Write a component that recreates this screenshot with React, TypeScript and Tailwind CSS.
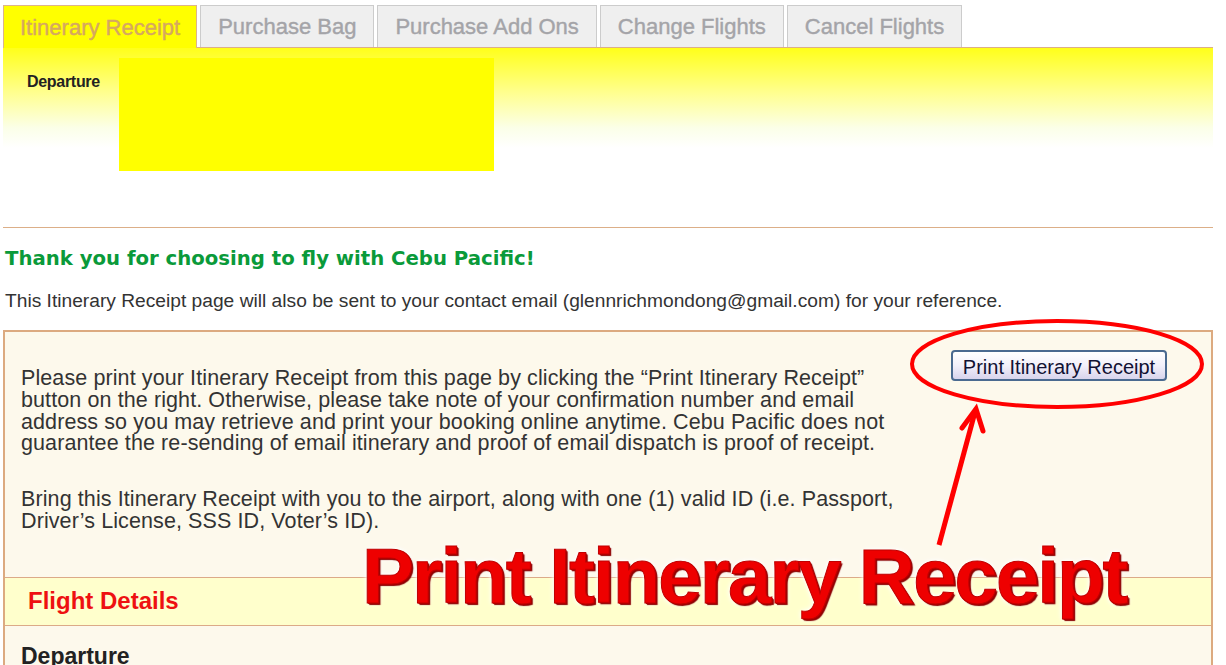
import React from "react";

const tabs = ["Itinerary Receipt", "Purchase Bag", "Purchase Add Ons", "Change Flights", "Cancel Flights"];

function Tabs() {
  return (
    <div className="flex items-end gap-[3px] pt-[5px] h-[47px]">
      {tabs.map((t, i) =>
        i === 0 ? (
          <div
            key={t}
            className="relative z-10 -mb-px flex h-[43px] items-center border border-b-0 border-[#dcb48c] bg-[#ffff00] px-[16px] text-[22px] text-[#d6a860] [-webkit-text-stroke:0.4px_#d6a860]"
          >
            {t}
          </div>
        ) : (
          <div
            key={t}
            className="flex h-[42px] items-center border border-[#cccccc] border-b-0 bg-[#efefef] px-[17px] text-[22px] text-[#a4a4a8] [-webkit-text-stroke:0.4px_#a4a4a8]"
          >
            {t}
          </div>
        )
      )}
    </div>
  );
}

function Overlay() {
  return (
    <>
      <svg className="pointer-events-none absolute left-0 top-0" width="1226" height="665">
        <ellipse cx="1057" cy="364" rx="145" ry="43" fill="none" stroke="#ff0000" strokeWidth="4" />
        <line x1="939" y1="545" x2="975" y2="412" stroke="#ff0000" strokeWidth="5" />
        <polyline points="962,428 976,409 983,431" fill="none" stroke="#ff0000" strokeWidth="5" strokeLinecap="round" />
      </svg>
      <div className="pointer-events-none absolute left-[362px] top-[537px] whitespace-nowrap font-['Liberation_Sans',Arial,sans-serif] text-[78px] font-bold leading-[78px] tracking-[-2px] text-[#ee0000] [text-shadow:1px_1px_0_#a00000,2px_2px_1px_#8a0000,0_0_4px_#ffffff,0_0_6px_#ffffff] [-webkit-text-stroke:1px_#c00000]">
        Print Itinerary Receipt
      </div>
    </>
  );
}

export default function App() {
  return (
    <div className="relative h-[665px] w-[1226px] overflow-hidden bg-white font-['Liberation_Sans',Arial,sans-serif] text-[#333333]">
      <div className="pl-[3px] pr-[13px]">
        <Tabs />

        <div className="flex h-[181px] items-start gap-[19px] border-y border-[#dcaf88] bg-[linear-gradient(to_bottom,#ffff1a_0px,#ffff90_45px,#fbffe8_80px,#ffffff_100px)] pl-[24px] pt-[10px]">
          <div className="mt-[12px] text-[16px] font-bold tracking-[-0.3px] text-[#222222]">Departure</div>
          <div className="h-[113px] w-[375px] bg-[#ffff00]" />
        </div>

        <h2 className="mt-[16px] pl-[2px] font-['DejaVu_Sans',Verdana,sans-serif] text-[19.7px] font-bold text-[#0a9a3a]">
          Thank you for choosing to fly with Cebu Pacific!
        </h2>
        <p className="mt-[13px] pl-[2px] text-[19.2px]">
          This Itinerary Receipt page will also be sent to your contact email (glennrichmondong@gmail.com) for your
          reference.
        </p>

        <div className="mt-[15px] border-2 border-b-0 border-[#dcaa80] bg-[#fdf9ec]">
          <div className="flex items-start justify-between pl-[16px] pr-[44px] pt-[18px]">
            <div className="mt-[18px] w-[900px] whitespace-nowrap text-[21.5px] leading-[21.7px] tracking-[0.1px]">
              <p>
                Please print your Itinerary Receipt from this page by clicking the “Print Itinerary Receipt”
                <br />
                button on the right. Otherwise, please take note of your confirmation number and email
                <br />
                address so you may retrieve and print your booking online anytime. Cebu Pacific does not
                <br />
                guarantee the re-sending of email itinerary and proof of email dispatch is proof of receipt.
              </p>
              <p className="mt-[34px]">
                Bring this Itinerary Receipt with you to the airport, along with one (1) valid ID (i.e. Passport,
                <br />
                Driver’s License, SSS ID, Voter’s ID).
              </p>
            </div>
            <button className="h-[31px] w-[216px] rounded-[4px] border-2 border-[#4a6a90] bg-[linear-gradient(to_bottom,#ffffff,#f2f0fa_50%,#d8d4ec)] text-[20px] text-[#111133]">
              Print Itinerary Receipt
            </button>
          </div>

          <div className="mt-[44px] flex h-[49px] items-center border-y border-[#dcaa88] bg-[#ffffcc] pl-[23px] text-[24px] font-bold text-[#ee1111]">
            Flight Details
          </div>
          <div className="pl-[16px] pt-[16px] text-[23px] font-bold leading-[28px] text-[#222222]">Departure</div>
        </div>
      </div>
      <Overlay />
    </div>
  );
}
